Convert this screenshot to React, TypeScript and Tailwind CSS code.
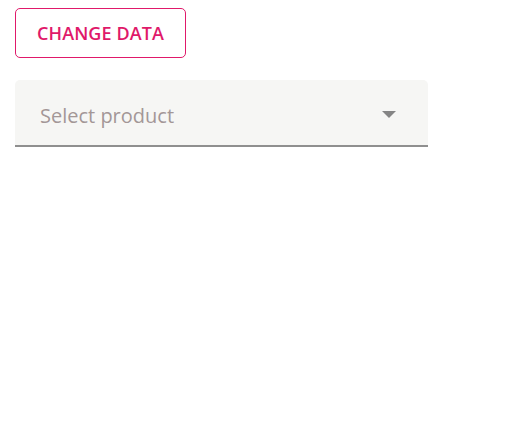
import React from "react";

export default function App() {
  return (
    <div className="min-h-screen bg-white" style={{ fontFamily: '"Open Sans", "Liberation Sans", sans-serif' }}>
      <div className="pt-2 pl-[15px] flex flex-col items-start gap-[22px]">
        <button className="h-[50px] w-[171px] rounded-[5px] border border-[#e0196a] text-[#e0196a] text-[18px] font-semibold tracking-[0.1px] flex items-center justify-center">
          CHANGE DATA
        </button>
        <div className="w-[413px] h-[67px] bg-[#f6f6f4] rounded-t-[5px] border-b-2 border-[#8f8f8f] flex items-center justify-between pl-[25px] pr-[32px]">
          <span className="text-[20px] text-[#a39797] pt-[6px]">Select product</span>
          <svg width="14" height="7" viewBox="0 0 14 7" className="mt-[3px]"><path d="M0 0 L14 0 L7 7 Z" fill="#858585" /></svg>
        </div>
      </div>
    </div>
  );
}
